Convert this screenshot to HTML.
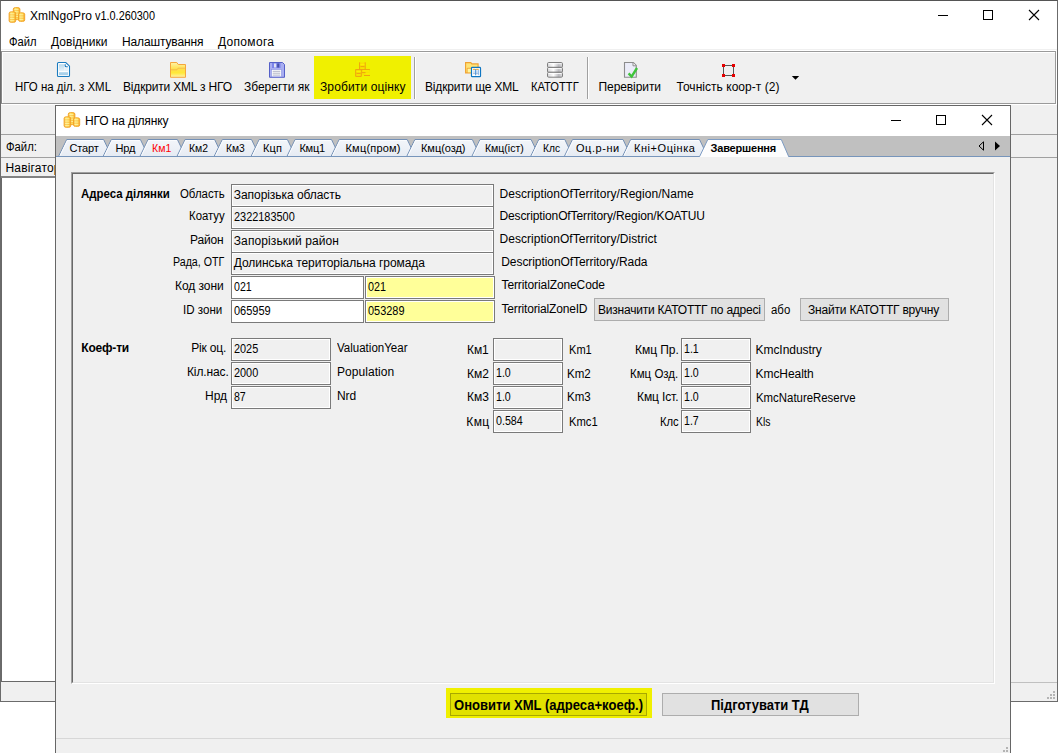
<!DOCTYPE html>
<html lang="uk">
<head>
<meta charset="utf-8">
<title>XmlNgoPro</title>
<style>
html,body{margin:0;padding:0;background:#fff;}
body{width:1058px;height:753px;position:relative;overflow:hidden;font-family:"Liberation Sans",sans-serif;font-size:12px;color:#000;}
.a{position:absolute;}
.t{position:absolute;white-space:pre;line-height:14px;font-size:12px;transform-origin:0 0;}
.f{position:absolute;box-sizing:border-box;border:1px solid #7a7a7a;background:#f0f0f0;box-shadow:inset 0 0 0 1px #fff;height:23px;}
.f.w{background:#fff;}
.f.y{background:#ffff99;}
.btn{position:absolute;box-sizing:border-box;border:1px solid #adadad;background:#e1e1e1;}
svg{position:absolute;overflow:visible;}
</style>
</head>
<body>
<!-- ================= MAIN WINDOW ================= -->
<div class="a" id="mainwin" style="left:0;top:0;width:1058px;height:702px;box-sizing:border-box;border:1px solid #6b6b6b;border-top-color:#555;background:#fff;"></div>
<!-- toolbar + mdi background -->
<div class="a" style="left:1px;top:51px;width:1056px;height:650px;background:#f0f0f0;"></div>
<!-- toolbar etched frame -->
<div class="a" style="left:1px;top:49px;width:1056px;height:1px;background:#f0f0f0;"></div>
<div class="a" style="left:1px;top:50px;width:1056px;height:1px;background:#fff;"></div>
<div class="a" style="left:1px;top:51px;width:1055px;height:53px;box-sizing:border-box;border:1px solid #9a9a9a;border-left-color:#888;"></div>
<div class="a" style="left:2px;top:52px;width:1053px;height:1px;background:#fff;"></div>
<div class="a" style="left:2px;top:52px;width:1px;height:51px;background:#fff;"></div>
<div class="a" style="left:1056px;top:51px;width:1px;height:54px;background:#fff;"></div>
<div class="a" style="left:1px;top:104px;width:1056px;height:1px;background:#fff;"></div>
<!-- toolbar highlight -->
<div class="a" style="left:314px;top:56px;width:97px;height:43px;background:#f0f000;"></div>
<!-- separators -->
<div class="a" style="left:414px;top:57px;width:1px;height:42px;background:#a0a0a0;"></div>
<div class="a" style="left:415px;top:57px;width:1px;height:42px;background:#fff;"></div>
<div class="a" style="left:587px;top:57px;width:1px;height:42px;background:#a0a0a0;"></div>
<div class="a" style="left:588px;top:57px;width:1px;height:42px;background:#fff;"></div>
<svg style="left:8px;top:6.5px" width="17" height="16" viewBox="0 0 17 16">
<defs><linearGradient id="cg" x1="0" y1="0" x2="1" y2="0"><stop offset="0" stop-color="#f8b63a"/><stop offset="0.3" stop-color="#ffe976"/><stop offset="0.65" stop-color="#ffd84e"/><stop offset="1" stop-color="#f5a526"/></linearGradient></defs>
<rect x="5.3" y="0.6" width="6.6" height="12.0" rx="2" ry="1.5" fill="url(#cg)" stroke="#f2a327" stroke-width="0.9"/><path d="M6.3 2.6h4.199999999999999" stroke="#fff4a8" stroke-width="0.9" opacity="0.9"/><path d="M5.8999999999999995 3.7h5.3999999999999995" stroke="#f4a63a" stroke-width="0.5" opacity="0.7"/><path d="M6.3 4.9h4.199999999999999" stroke="#fff4a8" stroke-width="0.9" opacity="0.9"/><path d="M5.8999999999999995 6.0h5.3999999999999995" stroke="#f4a63a" stroke-width="0.5" opacity="0.7"/><path d="M6.3 7.2h4.199999999999999" stroke="#fff4a8" stroke-width="0.9" opacity="0.9"/><path d="M5.8999999999999995 8.3h5.3999999999999995" stroke="#f4a63a" stroke-width="0.5" opacity="0.7"/><path d="M6.3 9.5h4.199999999999999" stroke="#fff4a8" stroke-width="0.9" opacity="0.9"/><path d="M5.8999999999999995 10.6h5.3999999999999995" stroke="#f4a63a" stroke-width="0.5" opacity="0.7"/>
<rect x="1.1000000000000005" y="4.8" width="6.6" height="10.5" rx="2" ry="1.5" fill="url(#cg)" stroke="#f2a327" stroke-width="0.9"/><path d="M2.1000000000000005 6.8h4.199999999999999" stroke="#fff4a8" stroke-width="0.9" opacity="0.9"/><path d="M1.7000000000000006 7.9h5.3999999999999995" stroke="#f4a63a" stroke-width="0.5" opacity="0.7"/><path d="M2.1000000000000005 9.1h4.199999999999999" stroke="#fff4a8" stroke-width="0.9" opacity="0.9"/><path d="M1.7000000000000006 10.2h5.3999999999999995" stroke="#f4a63a" stroke-width="0.5" opacity="0.7"/><path d="M2.1000000000000005 11.399999999999999h4.199999999999999" stroke="#fff4a8" stroke-width="0.9" opacity="0.9"/><path d="M1.7000000000000006 12.499999999999998h5.3999999999999995" stroke="#f4a63a" stroke-width="0.5" opacity="0.7"/><path d="M2.1000000000000005 13.7h4.199999999999999" stroke="#fff4a8" stroke-width="0.9" opacity="0.9"/><path d="M1.7000000000000006 14.799999999999999h5.3999999999999995" stroke="#f4a63a" stroke-width="0.5" opacity="0.7"/>
<rect x="10.5" y="5.8" width="6.2" height="8.600000000000001" rx="2" ry="1.5" fill="url(#cg)" stroke="#f2a327" stroke-width="0.9"/><path d="M11.5 7.8h3.8000000000000003" stroke="#fff4a8" stroke-width="0.9" opacity="0.9"/><path d="M11.1 8.9h5.0" stroke="#f4a63a" stroke-width="0.5" opacity="0.7"/><path d="M11.5 10.1h3.8000000000000003" stroke="#fff4a8" stroke-width="0.9" opacity="0.9"/><path d="M11.1 11.2h5.0" stroke="#f4a63a" stroke-width="0.5" opacity="0.7"/><path d="M11.5 12.399999999999999h3.8000000000000003" stroke="#fff4a8" stroke-width="0.9" opacity="0.9"/><path d="M11.1 13.499999999999998h5.0" stroke="#f4a63a" stroke-width="0.5" opacity="0.7"/>
</svg>
<svg style="left:56px;top:61px" width="16" height="18" viewBox="0 0 16 18">
<defs><linearGradient id="dg" x1="0" y1="0" x2="0" y2="1"><stop offset="0" stop-color="#b9d9ec"/><stop offset="1" stop-color="#e9f4fa"/></linearGradient></defs>
<path d="M1.5 2.5a1 1 0 0 1 1-1h7.3l3.7 3.7v9.3a1 1 0 0 1-1 1h-10a1 1 0 0 1-1-1z" fill="#fff" stroke="#1b7cc0" stroke-width="1.1"/>
<rect x="3" y="3.2" width="5.5" height="7" fill="url(#dg)"/><rect x="8.5" y="6.5" width="3.5" height="3.7" fill="#e6f1f8"/>
<rect x="3" y="11.2" width="9" height="3" fill="#a9d1ea"/>
<path d="M9.2 3.2v1.6a1 1 0 0 0 1 1h1.6" fill="none" stroke="#1b7cc0" stroke-width="1.1"/>
</svg>
<svg style="left:169px;top:61px" width="18" height="18" viewBox="0 0 18 18">
<defs><linearGradient id="fg" x1="0" y1="0" x2="0" y2="1"><stop offset="0" stop-color="#fff3a8"/><stop offset="0.45" stop-color="#ffe04a"/><stop offset="0.7" stop-color="#ffe838"/><stop offset="1" stop-color="#fff2b0"/></linearGradient></defs>
<path d="M1.5 1.5h6.3l1.4 2h7.3v12.8h-15z" fill="url(#fg)" stroke="#f5a63c" stroke-width="1"/>
<path d="M1.5 8.8h6.5l1-1.6h7.5" fill="none" stroke="#f3b04a" stroke-width="1" opacity="0.75"/>
</svg>
<svg style="left:268px;top:61px" width="18" height="18" viewBox="0 0 18 18">
<path d="M1.5 1.5h13l2 2v12.8h-15z" fill="#a9aef2" stroke="#5560c8" stroke-width="1"/>
<rect x="4" y="2" width="8.5" height="5" fill="#7d85ea"/><rect x="6" y="2.5" width="2.2" height="4" fill="#dfe2f4"/><rect x="9.2" y="2.5" width="2" height="4" fill="#4650a8"/>
<rect x="3.5" y="8.5" width="10" height="7.3" fill="#fff" stroke="#8890e0" stroke-width="0.6"/>
<path d="M4.7 10.3h7.6M4.7 12.2h7.6M4.7 14.1h7.6" stroke="#9a9eb8" stroke-width="0.8"/>
</svg>
<svg style="left:354px;top:61px" width="18" height="18" viewBox="0 0 18 18">
<rect x="5.6" y="1.4" width="5.6" height="7" fill="#f7e200"/>
<rect x="1.8" y="8.6" width="5.4" height="6.6" fill="#f7e200"/>
<rect x="7.8" y="8.6" width="7.8" height="5.8" fill="#f7e200"/>
<g fill="none" stroke="#f0a010" stroke-width="1">
<path d="M5.6 1.3v7M11.2 1.3v7"/>
<path d="M1.7 8.4v7h5.6v-7M1.7 8.6h14.2"/>
<path d="M10 14.5h6"/>
</g>
<path d="M6.5 5.6h4M2.5 12.4h4.2M8 11.6h3.5" stroke="#ee9a10" stroke-width="0.9"/>
<path d="M6.3 3.6h4.2M2.5 10.4h4.2M9 9.9h6M11.5 12.9h4" stroke="#fff200" stroke-width="0.9"/>
</svg>
<svg style="left:464px;top:61px" width="19" height="18" viewBox="0 0 19 18">
<path d="M1.6 1.6h5.2l1 1.3h6.3v9h-12.5z" fill="#ffe477" stroke="#f0a030" stroke-width="1.1"/>
<path d="M3.2 11.5v-4.2h4" fill="none" stroke="#f0a030" stroke-width="1"/>
<rect x="3.7" y="7.8" width="4" height="3.5" fill="#fff7a0"/>
<rect x="7.5" y="6.4" width="9" height="9.3" rx="0.8" fill="#fff" stroke="#0f76c2" stroke-width="1.2"/>
<rect x="9" y="8.8" width="6" height="5" fill="#f1f7fe"/>
<path d="M9.1 8.4h2.2M12.1 8.4h2.6" stroke="#f7b13c" stroke-width="1.1"/>
<path d="M9 12.2h6" stroke="#8fa6c8" stroke-width="0.9"/>
<path d="M9 10.2h6" stroke="#c5dbf3" stroke-width="0.9"/>
<path d="M11.7 8v6.3" stroke="#3f8edb" stroke-width="1"/>
<path d="M14.4 8.6v5.6" stroke="#86b4e8" stroke-width="0.9"/>
</svg>
<svg style="left:546px;top:61px" width="18" height="18" viewBox="0 0 18 18">
<defs><linearGradient id="bg" x1="0" y1="0" x2="1" y2="0"><stop offset="0" stop-color="#d6d6d8"/><stop offset="0.4" stop-color="#fdfdfd"/><stop offset="0.75" stop-color="#b9b9bd"/><stop offset="1" stop-color="#e0e0e2"/></linearGradient></defs>
<g fill="url(#bg)" stroke="#7e7e7e" stroke-width="1">
<rect x="1.5" y="1.5" width="15" height="4.9" rx="1.2"/>
<rect x="1.5" y="6.4" width="15" height="4.9" rx="1.2"/>
<rect x="1.5" y="11.3" width="15" height="4.9" rx="1.2"/>
</g>
<path d="M2.5 2.7h13M2.5 7.6h13M2.5 12.5h13" stroke="#fff" stroke-width="1" opacity="0.9"/>
</svg>
<svg style="left:623px;top:61px" width="18" height="18" viewBox="0 0 18 18">
<path d="M1.5 1.5h8.8l3 3v11.7h-11.8z" fill="#ebecf8" stroke="#8c8c8c" stroke-width="1.1"/>
<path d="M10 1.8v3h3" fill="#fff" stroke="#8c8c8c" stroke-width="1"/>
<path d="M5.6 12.4l3 3.2l5.4-8.6" fill="none" stroke="#3fc43a" stroke-width="2.4" stroke-linejoin="miter"/>
</svg>
<svg style="left:721px;top:63px" width="16" height="16" viewBox="0 0 16 16">
<rect x="2.5" y="2.5" width="10" height="10" fill="none" stroke="#555" stroke-width="1"/>
<rect x="1" y="1" width="3" height="3" fill="#e60000"/><rect x="11" y="1" width="3" height="3" fill="#e60000"/>
<rect x="1" y="11" width="3" height="3" fill="#e60000"/><rect x="11" y="11" width="3" height="3" fill="#e60000"/>
</svg>
<svg style="left:791px;top:75px" width="10" height="6" viewBox="0 0 10 6"><path d="M0.8 1h7.4l-3.7 3.8z" fill="#000"/></svg>
<!-- rows left/right of child -->
<div class="a" style="left:1px;top:134px;width:1056px;height:1px;background:#a0a0a0;"></div>
<div class="a" style="left:1px;top:157px;width:1056px;height:1px;background:#a0a0a0;"></div>
<div class="a" style="left:1px;top:176px;width:55px;height:2px;background:#828282;"></div>
<div class="a" style="left:1px;top:178px;width:55px;height:503px;background:#fff;border-left:1px solid #696969;box-sizing:border-box;"></div>
<div class="a" style="left:1px;top:681px;width:55px;height:1px;background:#696969;"></div>
<div class="a" style="left:1011px;top:682px;width:46px;height:1px;background:#c0c0c0;"></div>
<svg style="left:1046px;top:690px" width="10" height="10" viewBox="0 0 10 10" shape-rendering="crispEdges"><g fill="#b4b4b4"><rect x="7" y="1" width="2" height="2"/><rect x="4" y="4" width="2" height="2"/><rect x="7" y="4" width="2" height="2"/><rect x="1" y="7" width="2" height="2"/><rect x="4" y="7" width="2" height="2"/><rect x="7" y="7" width="2" height="2"/></g></svg>
<!-- window controls main -->
<svg style="left:930px;top:5px" width="120" height="22" viewBox="0 0 120 22">
<path d="M8 10.5h10" stroke="#000" stroke-width="1" fill="none"/>
<rect x="53.5" y="5.5" width="9" height="9" stroke="#000" stroke-width="1" fill="none"/>
<path d="M99 5l10 10M109 5l-10 10" stroke="#000" stroke-width="1.1" fill="none"/>
</svg>
<span class="t" style="left:30.00px;top:9px;letter-spacing:0.068px">XmlNgoPro</span>
<span class="t" style="left:95.00px;top:9px;transform:scaleX(0.9082)">v1.0.260300</span>
<span class="t" style="left:8.50px;top:35px;transform:scaleX(0.9317)">Файл</span>
<span class="t" style="left:51.00px;top:35px;letter-spacing:0.029px">Довідники</span>
<span class="t" style="left:122.00px;top:35px;letter-spacing:-0.132px">Налаштування</span>
<span class="t" style="left:218.00px;top:35px;letter-spacing:0.310px">Допомога</span>
<span class="t" style="left:15.00px;top:80px;transform:scaleX(0.9539)">НГО на діл. з XML</span>
<span class="t" style="left:123.00px;top:80px;letter-spacing:-0.180px">Відкрити XML з НГО</span>
<span class="t" style="left:244.00px;top:80px;letter-spacing:-0.017px">Зберегти як</span>
<span class="t" style="left:320.00px;top:80px;letter-spacing:0.120px">Зробити оцінку</span>
<span class="t" style="left:425.00px;top:80px;letter-spacing:-0.180px">Відкрити ще XML</span>
<span class="t" style="left:531.30px;top:80px;transform:scaleX(0.9290)">КАТОТТГ</span>
<span class="t" style="left:598.50px;top:80px;letter-spacing:-0.085px">Перевірити</span>
<span class="t" style="left:676.50px;top:80px;letter-spacing:0.032px">Точність коор-т (2)</span>
<span class="t" style="left:5.50px;top:140px;transform:scaleX(0.9408)">Файл:</span>
<span class="t" style="left:5.50px;top:161px;letter-spacing:0.172px">Навігатор</span>
<!-- ================= CHILD WINDOW ================= -->
<div class="a" id="child" style="left:55px;top:105px;width:956px;height:660px;box-sizing:border-box;border:1px solid #666;background:#f0f0f0;"></div>
<div class="a" style="left:56px;top:106px;width:954px;height:30px;background:#fff;"></div>
<div class="a" style="left:56px;top:136px;width:954px;height:20px;background:#c0c0c0;"></div>
<div class="a" style="left:56px;top:156px;width:954px;height:1px;background:#7da2ce;"></div>
<svg style="left:880px;top:110px" width="120" height="22" viewBox="0 0 120 22">
<path d="M11 10.5h10" stroke="#000" stroke-width="1" fill="none"/>
<rect x="56.5" y="5.5" width="9" height="9" stroke="#000" stroke-width="1" fill="none"/>
<path d="M102 5l10 10M112 5l-10 10" stroke="#000" stroke-width="1.1" fill="none"/>
</svg>
<svg style="left:0;top:0" width="1058" height="160" viewBox="0 0 1058 160">
<defs><linearGradient id="tg" x1="0" y1="0" x2="0" y2="1"><stop offset="0" stop-color="#f3f6fa"/><stop offset="1" stop-color="#e6ebf3"/></linearGradient></defs>
<path d="M58.5 156.5 L66.7 139.5 H103.6 L111.8 156.5" fill="url(#tg)" stroke="#7390b6" stroke-width="1"/>
<path d="M60.1 155.5 L67.4 140.5 H103.1" fill="none" stroke="#fbfcfe" stroke-width="1"/>
<path d="M103.1 156.5 L111.3 139.5 H140.4 L148.6 156.5" fill="url(#tg)" stroke="#7390b6" stroke-width="1"/>
<path d="M104.7 155.5 L112.0 140.5 H139.9" fill="none" stroke="#fbfcfe" stroke-width="1"/>
<path d="M139.9 156.5 L148.1 139.5 H177.4 L185.6 156.5" fill="url(#tg)" stroke="#7390b6" stroke-width="1"/>
<path d="M141.5 155.5 L148.8 140.5 H176.9" fill="none" stroke="#fbfcfe" stroke-width="1"/>
<path d="M176.9 156.5 L185.1 139.5 H214.6 L222.8 156.5" fill="url(#tg)" stroke="#7390b6" stroke-width="1"/>
<path d="M178.5 155.5 L185.8 140.5 H214.1" fill="none" stroke="#fbfcfe" stroke-width="1"/>
<path d="M214.1 156.5 L222.3 139.5 H251.5 L259.7 156.5" fill="url(#tg)" stroke="#7390b6" stroke-width="1"/>
<path d="M215.7 155.5 L223.0 140.5 H251.0" fill="none" stroke="#fbfcfe" stroke-width="1"/>
<path d="M251.0 156.5 L259.2 139.5 H287.4 L295.6 156.5" fill="url(#tg)" stroke="#7390b6" stroke-width="1"/>
<path d="M252.6 155.5 L259.9 140.5 H286.9" fill="none" stroke="#fbfcfe" stroke-width="1"/>
<path d="M286.9 156.5 L295.1 139.5 H331.5 L339.7 156.5" fill="url(#tg)" stroke="#7390b6" stroke-width="1"/>
<path d="M288.5 155.5 L295.8 140.5 H331.0" fill="none" stroke="#fbfcfe" stroke-width="1"/>
<path d="M331.0 156.5 L339.2 139.5 H407.2 L415.4 156.5" fill="url(#tg)" stroke="#7390b6" stroke-width="1"/>
<path d="M332.6 155.5 L339.9 140.5 H406.7" fill="none" stroke="#fbfcfe" stroke-width="1"/>
<path d="M406.7 156.5 L414.9 139.5 H472.3 L480.5 156.5" fill="url(#tg)" stroke="#7390b6" stroke-width="1"/>
<path d="M408.3 155.5 L415.6 140.5 H471.8" fill="none" stroke="#fbfcfe" stroke-width="1"/>
<path d="M471.8 156.5 L480.0 139.5 H531.1 L539.3 156.5" fill="url(#tg)" stroke="#7390b6" stroke-width="1"/>
<path d="M473.4 155.5 L480.7 140.5 H530.6" fill="none" stroke="#fbfcfe" stroke-width="1"/>
<path d="M530.6 156.5 L538.8 139.5 H564.8 L573.0 156.5" fill="url(#tg)" stroke="#7390b6" stroke-width="1"/>
<path d="M532.2 155.5 L539.5 140.5 H564.3" fill="none" stroke="#fbfcfe" stroke-width="1"/>
<path d="M564.3 156.5 L572.5 139.5 H623.0 L631.2 156.5" fill="url(#tg)" stroke="#7390b6" stroke-width="1"/>
<path d="M565.9 155.5 L573.2 140.5 H622.5" fill="none" stroke="#fbfcfe" stroke-width="1"/>
<path d="M622.5 156.5 L630.7 139.5 H699.5 L707.7 156.5" fill="url(#tg)" stroke="#7390b6" stroke-width="1"/>
<path d="M624.1 155.5 L631.4 140.5 H699.0" fill="none" stroke="#fbfcfe" stroke-width="1"/>
<path d="M699.6 157 L707.8 139.5 H781.3 L788.7 157 Z" fill="#fdfdfd" stroke="none"/>
<path d="M699.6 156.5 L707.8 139.5 H781.3 L788.7 156.5" fill="none" stroke="#7d9cc4" stroke-width="1"/>
<path d="M56 156.5H699.6M788.7 156.5H1010" stroke="#7795bb" stroke-width="1" fill="none"/>
</svg><svg style="left:63px;top:111.5px" width="17" height="16" viewBox="0 0 17 16">
<defs><linearGradient id="cg2" x1="0" y1="0" x2="1" y2="0"><stop offset="0" stop-color="#f8b63a"/><stop offset="0.3" stop-color="#ffe976"/><stop offset="0.65" stop-color="#ffd84e"/><stop offset="1" stop-color="#f5a526"/></linearGradient></defs>
<rect x="5.3" y="0.6" width="6.6" height="12.0" rx="2" ry="1.5" fill="url(#cg2)" stroke="#f2a327" stroke-width="0.9"/><path d="M6.3 2.6h4.199999999999999" stroke="#fff4a8" stroke-width="0.9" opacity="0.9"/><path d="M5.8999999999999995 3.7h5.3999999999999995" stroke="#f4a63a" stroke-width="0.5" opacity="0.7"/><path d="M6.3 4.9h4.199999999999999" stroke="#fff4a8" stroke-width="0.9" opacity="0.9"/><path d="M5.8999999999999995 6.0h5.3999999999999995" stroke="#f4a63a" stroke-width="0.5" opacity="0.7"/><path d="M6.3 7.2h4.199999999999999" stroke="#fff4a8" stroke-width="0.9" opacity="0.9"/><path d="M5.8999999999999995 8.3h5.3999999999999995" stroke="#f4a63a" stroke-width="0.5" opacity="0.7"/><path d="M6.3 9.5h4.199999999999999" stroke="#fff4a8" stroke-width="0.9" opacity="0.9"/><path d="M5.8999999999999995 10.6h5.3999999999999995" stroke="#f4a63a" stroke-width="0.5" opacity="0.7"/>
<rect x="1.1000000000000005" y="4.8" width="6.6" height="10.5" rx="2" ry="1.5" fill="url(#cg2)" stroke="#f2a327" stroke-width="0.9"/><path d="M2.1000000000000005 6.8h4.199999999999999" stroke="#fff4a8" stroke-width="0.9" opacity="0.9"/><path d="M1.7000000000000006 7.9h5.3999999999999995" stroke="#f4a63a" stroke-width="0.5" opacity="0.7"/><path d="M2.1000000000000005 9.1h4.199999999999999" stroke="#fff4a8" stroke-width="0.9" opacity="0.9"/><path d="M1.7000000000000006 10.2h5.3999999999999995" stroke="#f4a63a" stroke-width="0.5" opacity="0.7"/><path d="M2.1000000000000005 11.399999999999999h4.199999999999999" stroke="#fff4a8" stroke-width="0.9" opacity="0.9"/><path d="M1.7000000000000006 12.499999999999998h5.3999999999999995" stroke="#f4a63a" stroke-width="0.5" opacity="0.7"/><path d="M2.1000000000000005 13.7h4.199999999999999" stroke="#fff4a8" stroke-width="0.9" opacity="0.9"/><path d="M1.7000000000000006 14.799999999999999h5.3999999999999995" stroke="#f4a63a" stroke-width="0.5" opacity="0.7"/>
<rect x="10.5" y="5.8" width="6.2" height="8.600000000000001" rx="2" ry="1.5" fill="url(#cg2)" stroke="#f2a327" stroke-width="0.9"/><path d="M11.5 7.8h3.8000000000000003" stroke="#fff4a8" stroke-width="0.9" opacity="0.9"/><path d="M11.1 8.9h5.0" stroke="#f4a63a" stroke-width="0.5" opacity="0.7"/><path d="M11.5 10.1h3.8000000000000003" stroke="#fff4a8" stroke-width="0.9" opacity="0.9"/><path d="M11.1 11.2h5.0" stroke="#f4a63a" stroke-width="0.5" opacity="0.7"/><path d="M11.5 12.399999999999999h3.8000000000000003" stroke="#fff4a8" stroke-width="0.9" opacity="0.9"/><path d="M11.1 13.499999999999998h5.0" stroke="#f4a63a" stroke-width="0.5" opacity="0.7"/>
</svg>
<!-- tab scroll arrows -->
<svg style="left:975px;top:139.4px" width="30" height="14" viewBox="0 0 30 14">
<path d="M8.5 2.8v8.4L4 7z" stroke="#000" stroke-width="1" fill="none"/>
<path d="M20 2.5v9L25 7z" fill="#000"/>
</svg>
<!-- panel -->
<div class="a" style="left:71px;top:172px;width:924px;height:512px;box-sizing:border-box;border-top:1px solid #a0a0a0;border-left:1px solid #a0a0a0;border-right:1px solid #fff;border-bottom:1px solid #fff;"></div>
<div class="a" style="left:72px;top:173px;width:922px;height:510px;box-sizing:border-box;border-top:1px solid #696969;border-left:1px solid #696969;border-right:1px solid #e3e3e3;border-bottom:1px solid #e3e3e3;"></div>
<!-- address fields -->
<div class="f" style="left:231px;top:184px;width:263px;"></div>
<div class="f" style="left:231px;top:206px;width:263px;"></div>
<div class="f" style="left:231px;top:230px;width:263px;"></div>
<div class="f" style="left:231px;top:252px;width:263px;"></div>
<div class="f w" style="left:231px;top:276px;width:133px;"></div>
<div class="f w" style="left:231px;top:300px;width:133px;"></div>
<div class="f y" style="left:365px;top:276px;width:130px;"></div>
<div class="f y" style="left:365px;top:300px;width:130px;"></div>
<div class="btn" style="left:594px;top:298px;width:171px;height:23px;"></div>
<div class="btn" style="left:800px;top:298px;width:149px;height:23px;"></div>
<!-- coef fields -->
<div class="f" style="left:231px;top:338px;width:100px;"></div>
<div class="f" style="left:231px;top:362px;width:100px;"></div>
<div class="f" style="left:231px;top:386px;width:100px;"></div>
<div class="f" style="left:493px;top:338px;width:70px;"></div>
<div class="f" style="left:493px;top:362px;width:70px;"></div>
<div class="f" style="left:493px;top:386px;width:70px;"></div>
<div class="f" style="left:493px;top:410px;width:70px;"></div>
<div class="f" style="left:681px;top:338px;width:70px;"></div>
<div class="f" style="left:681px;top:362px;width:70px;"></div>
<div class="f" style="left:681px;top:386px;width:70px;"></div>
<div class="f" style="left:681px;top:410px;width:70px;"></div>
<!-- bottom buttons -->
<div class="a" style="left:446px;top:688px;width:206px;height:30px;background:#f0f000;"></div>
<div class="a" style="left:450px;top:693px;width:197px;height:23px;box-sizing:border-box;border:1px solid #a8a800;background:#e1e100;"></div>
<div class="btn" style="left:662px;top:693px;width:197px;height:23px;"></div>
<!-- status line -->
<div class="a" style="left:56px;top:738px;width:954px;height:1px;background:#d7d7d7;"></div>
<svg style="left:999px;top:746px" width="10" height="10" viewBox="0 0 10 10" shape-rendering="crispEdges"><g fill="#b4b4b4"><rect x="7" y="1" width="2" height="2"/><rect x="4" y="4" width="2" height="2"/><rect x="7" y="4" width="2" height="2"/><rect x="1" y="7" width="2" height="2"/><rect x="4" y="7" width="2" height="2"/><rect x="7" y="7" width="2" height="2"/></g></svg>
<span class="t" style="left:85.00px;top:114px;letter-spacing:-0.114px">НГО на ділянку</span>
<span class="t" style="left:69.50px;top:142px;letter-spacing:-0.160px;font-size:11px;line-height:13px">Старт</span>
<span class="t" style="left:115.50px;top:142px;letter-spacing:-0.117px;font-size:11px;line-height:13px">Нрд</span>
<span class="t" style="left:152.00px;top:142px;transform:scaleX(0.9580);color:#ff0000;font-size:11px;line-height:13px">Км1</span>
<span class="t" style="left:189.25px;top:142px;transform:scaleX(0.9456);font-size:11px;line-height:13px">Км2</span>
<span class="t" style="left:226.25px;top:142px;transform:scaleX(0.9331);font-size:11px;line-height:13px">Км3</span>
<span class="t" style="left:263.00px;top:142px;letter-spacing:0.164px;font-size:11px;line-height:13px">Кцп</span>
<span class="t" style="left:299.50px;top:142px;letter-spacing:-0.297px;font-size:11px;line-height:13px">Кмц1</span>
<span class="t" style="left:345.50px;top:142px;letter-spacing:0.205px;font-size:11px;line-height:13px">Кмц(пром)</span>
<span class="t" style="left:421.00px;top:142px;letter-spacing:-0.045px;font-size:11px;line-height:13px">Кмц(озд)</span>
<span class="t" style="left:485.00px;top:142px;transform:scaleX(0.9546);font-size:11px;line-height:13px">Кмц(іст)</span>
<span class="t" style="left:543.00px;top:142px;transform:scaleX(0.9275);font-size:11px;line-height:13px">Клс</span>
<span class="t" style="left:576.00px;top:142px;letter-spacing:0.555px;font-size:11px;line-height:13px">Оц.р-ни</span>
<span class="t" style="left:634.00px;top:142px;letter-spacing:0.566px;font-size:11px;line-height:13px">Кні+Оцінка</span>
<span class="t" style="left:710.50px;top:142px;letter-spacing:-0.191px;font-weight:bold;font-size:11px;line-height:13px">Завершення</span>
<span class="t" style="left:81.25px;top:187px;transform:scaleX(0.9525);font-weight:bold">Адреса ділянки</span>
<span class="t" style="left:179.50px;top:187px;transform:scaleX(0.9502)">Область</span>
<span class="t" style="left:189.25px;top:209px;transform:scaleX(0.9478)">Коатуу</span>
<span class="t" style="left:190.00px;top:233px;letter-spacing:-0.137px">Район</span>
<span class="t" style="left:173.00px;top:255px;transform:scaleX(0.8867)">Рада, ОТГ</span>
<span class="t" style="left:175.00px;top:279px;letter-spacing:-0.051px">Код зони</span>
<span class="t" style="left:183.25px;top:303px;transform:scaleX(0.9639)">ID зони</span>
<span class="t" style="left:233.75px;top:188px;letter-spacing:-0.052px">Запорізька область</span>
<span class="t" style="left:233.75px;top:210px;transform:scaleX(0.9101)">2322183500</span>
<span class="t" style="left:233.75px;top:234px;letter-spacing:0.107px">Запорізький район</span>
<span class="t" style="left:233.75px;top:256px;letter-spacing:-0.040px">Долинська територіальна громада</span>
<span class="t" style="left:233.75px;top:280px;transform:scaleX(0.8861)">021</span>
<span class="t" style="left:233.75px;top:304px;transform:scaleX(0.9177)">065959</span>
<span class="t" style="left:368.00px;top:280px;transform:scaleX(0.8986)">021</span>
<span class="t" style="left:368.00px;top:304px;transform:scaleX(0.9114)">053289</span>
<span class="t" style="left:499.50px;top:187px;letter-spacing:0.046px">DescriptionOfTerritory/Region/Name</span>
<span class="t" style="left:499.50px;top:209px;letter-spacing:-0.124px">DescriptionOfTerritory/Region/KOATUU</span>
<span class="t" style="left:499.50px;top:232px;letter-spacing:0.041px">DescriptionOfTerritory/District</span>
<span class="t" style="left:501.25px;top:255px;letter-spacing:-0.070px">DescriptionOfTerritory/Rada</span>
<span class="t" style="left:501.50px;top:278px;letter-spacing:-0.105px">TerritorialZoneCode</span>
<span class="t" style="left:501.50px;top:302px;letter-spacing:-0.169px">TerritorialZoneID</span>
<span class="t" style="left:598.00px;top:303px;letter-spacing:-0.216px">Визначити КАТОТТГ по адресі</span>
<span class="t" style="left:771.25px;top:303px;transform:scaleX(0.9514)">або</span>
<span class="t" style="left:808.00px;top:303px;letter-spacing:-0.201px">Знайти КАТОТТГ вручну</span>
<span class="t" style="left:81.25px;top:341px;letter-spacing:-0.180px;font-weight:bold">Коеф-ти</span>
<span class="t" style="left:191.25px;top:341px;letter-spacing:-0.190px">Рік оц.</span>
<span class="t" style="left:187.00px;top:365px;letter-spacing:-0.127px">Кіл.нас.</span>
<span class="t" style="left:205.00px;top:389px;letter-spacing:-0.039px">Нрд</span>
<span class="t" style="left:233.75px;top:342px;transform:scaleX(0.9081)">2025</span>
<span class="t" style="left:233.75px;top:366px;transform:scaleX(0.9081)">2000</span>
<span class="t" style="left:233.75px;top:390px;transform:scaleX(0.8795)">87</span>
<span class="t" style="left:337.00px;top:341px;transform:scaleX(0.9604)">ValuationYear</span>
<span class="t" style="left:337.00px;top:365px;letter-spacing:0.059px">Population</span>
<span class="t" style="left:337.00px;top:389px;letter-spacing:-0.047px">Nrd</span>
<span class="t" style="left:467.00px;top:343px;letter-spacing:-0.086px">Км1</span>
<span class="t" style="left:467.00px;top:367px;letter-spacing:0.039px">Км2</span>
<span class="t" style="left:467.00px;top:390px;letter-spacing:0.039px">Км3</span>
<span class="t" style="left:466.25px;top:415px;letter-spacing:0.438px">Кмц</span>
<span class="t" style="left:496.25px;top:366px;transform:scaleX(0.8839)">1.0</span>
<span class="t" style="left:496.25px;top:390px;transform:scaleX(0.8839)">1.0</span>
<span class="t" style="left:496.25px;top:414px;transform:scaleX(0.8907)">0.584</span>
<span class="t" style="left:569.25px;top:343px;transform:scaleX(0.9215)">Km1</span>
<span class="t" style="left:567.00px;top:367px;transform:scaleX(0.9620)">Km2</span>
<span class="t" style="left:567.00px;top:390px;transform:scaleX(0.9620)">Km3</span>
<span class="t" style="left:569.25px;top:415px;transform:scaleX(0.9369)">Kmc1</span>
<span class="t" style="left:635.00px;top:343px;letter-spacing:-0.057px">Кмц Пр.</span>
<span class="t" style="left:630.00px;top:367px;transform:scaleX(0.9581)">Кмц Озд.</span>
<span class="t" style="left:637.00px;top:390px;letter-spacing:-0.112px">Кмц Іст.</span>
<span class="t" style="left:660.00px;top:415px;transform:scaleX(0.9375)">Клс</span>
<span class="t" style="left:684.25px;top:342px;transform:scaleX(0.8839)">1.1</span>
<span class="t" style="left:684.25px;top:366px;transform:scaleX(0.8839)">1.0</span>
<span class="t" style="left:684.25px;top:390px;transform:scaleX(0.8839)">1.0</span>
<span class="t" style="left:684.25px;top:414px;transform:scaleX(0.8839)">1.7</span>
<span class="t" style="left:755.50px;top:343px;letter-spacing:-0.044px">KmcIndustry</span>
<span class="t" style="left:755.50px;top:367px;letter-spacing:-0.055px">KmcHealth</span>
<span class="t" style="left:755.50px;top:391px;transform:scaleX(0.9503)">KmcNatureReserve</span>
<span class="t" style="left:755.50px;top:415px;transform:scaleX(0.8697)">Kls</span>
<span class="t" style="left:453.50px;top:697px;transform:scaleX(0.9309);font-weight:bold;font-size:14px;line-height:16px">Оновити XML (адреса+коеф.)</span>
<span class="t" style="left:711.30px;top:697px;transform:scaleX(0.9268);font-weight:bold;font-size:14px;line-height:16px">Підготувати ТД</span>
</body>
</html>
